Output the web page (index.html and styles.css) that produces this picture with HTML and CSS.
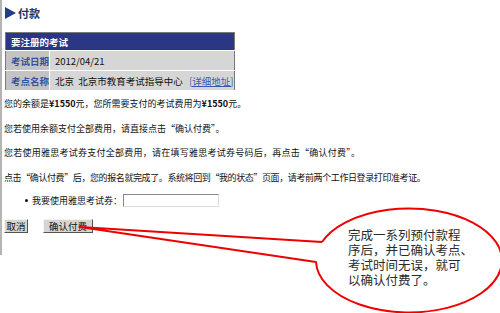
FILE: index.html
```html
<!DOCTYPE html>
<html lang="zh-CN">
<head>
<meta charset="utf-8">
<title>付款</title>
<link rel="stylesheet" href="styles.css">
</head>
<body>
<div class="page">
  <div class="title">
    <span class="tri"></span><span class="title-text">付款</span>
  </div>
  <table class="exam">
    <tr><th colspan="2" class="head">要注册的考试</th></tr>
    <tr><td class="label">考试日期</td><td class="value">2012/04/21</td></tr>
    <tr><td class="label">考点名称</td><td class="value">北京&nbsp;&nbsp;北京市教育考试指导中心&nbsp;&nbsp;&nbsp;<a class="link">[详细地址]</a></td></tr>
  </table>
  <p class="line first">您的余额是<b>¥1550</b>元，您所需要支付的考试费用为<b>¥1550</b>元。</p>
  <p class="line">您若使用余额支付全部费用，请直接点击“确认付费”。</p>
  <p class="line wide3">您若使用雅思考试券支付全部费用，请在填写雅思考试券号码后，再点击“确认付费”。</p>
  <p class="line tight4">点击“确认付费”后，您的报名就完成了。系统将回到“我的状态”页面，请考前两个工作日登录打印准考证。</p>
  <ul class="opts">
    <li><span>我要使用雅思考试券：</span><input class="voucher" type="text"></li>
  </ul>
  <div class="buttons">
    <button class="btn">取消</button>
    <button class="btn wide">确认付费</button>
  </div>
</div>
<svg class="callout" width="500" height="313" viewBox="0 0 500 313">
  <path d="M 322 242 L 80 227 L 316 262 A 93 52 0 1 0 322 242" fill="none" stroke="#ee0000" stroke-width="2" stroke-linejoin="round"/>
</svg>
<div class="callout-text">
  <div class="cl">完成一系列预付款程</div>
  <div class="cl">序后，并已确认考点、</div>
  <div class="cl">考试时间无误，就可</div>
  <div class="cl">以确认付费了。</div>
</div>
</body>
</html>
```

FILE: styles.css
```css
html, body {
  margin: 0;
  padding: 0;
  background: #fff;
}
body {
  font-family: "Noto Sans CJK SC", "Liberation Sans", sans-serif;
  font-size: 9px;
  color: #111;
  position: relative;
  width: 500px;
  height: 313px;
  overflow: hidden;
}
.page {
  border-left: 2px solid #b4b4b4;
  height: 255px;
  padding-left: 2px;
  box-sizing: border-box;
  padding-top: 6px;
}
.title {
  display: flex;
  align-items: center;
  height: 14px;
  padding-left: 1px;
}
.tri {
  width: 0;
  height: 0;
  border-top: 6px solid transparent;
  border-bottom: 6px solid transparent;
  border-left: 11px solid #233c8c;
  margin-right: 2px;
}
.title-text {
  font-weight: bold;
  font-size: 11px;
  color: #23305e;
}
.exam {
  margin: 12px 0 0 1px;
  border-collapse: collapse;
  border: 1px solid #7a7a7a;
  width: 229px;
  font-size: 9.5px;
}
.exam td, .exam th {
  padding: 0 0 0 5px;
  text-align: left;
  white-space: nowrap;
}
.head {
  background: #2b3785;
  color: #fff;
  font-weight: bold;
  height: 17px;
  border-bottom: 1px solid #fff;
}
.label {
  background: #c3c3c3;
  color: #3452a2;
  font-weight: bold;
  width: 42px;
  height: 19px;
  border-bottom: 1px solid #fff;
  border-right: 1px solid #fff;
}
.value {
  background: #d6d6d6;
  color: #111;
  height: 19px;
  border-bottom: 1px solid #fff;
}
.link {
  color: #3a56b0;
  text-decoration: underline;
}
.line {
  margin: 0;
  height: 24.5px;
  line-height: 24.5px;
  white-space: nowrap;
}
.line.first {
  margin-top: 1px;
}
.line.wide3 {
  letter-spacing: 0.25px;
}
.line.tight4 {
  letter-spacing: -0.4px;
}
.opts {
  margin: 0;
  padding: 0 0 0 21px;
  list-style: none;
}
.opts li {
  height: 20px;
  display: flex;
  align-items: center;
}
.opts li::before {
  content: "";
  width: 3px;
  height: 3px;
  background: #111;
  border-radius: 50%;
  margin-right: 4px;
}
.voucher {
  width: 96px;
  height: 13px;
  box-sizing: border-box;
  border: 1px solid #888;
  border-right-color: #ddd;
  border-bottom-color: #ddd;
  margin: 0 0 0 1px;
  padding: 0;
}
.buttons {
  display: flex;
  gap: 15px;
  margin-top: 9px;
}
.btn {
  font-family: inherit;
  font-size: 9.5px;
  height: 14px;
  width: 24px;
  padding: 0;
  background: #d8d5ce;
  border: 1px solid;
  border-color: #f4f4f4 #555 #555 #f4f4f4;
  line-height: 12px;
  color: #111;
}
.btn.wide {
  width: 50px;
}
.callout {
  position: absolute;
  left: 0;
  top: 0;
  pointer-events: none;
}
.callout-text {
  position: absolute;
  left: 348px;
  top: 227px;
  font-size: 12.5px;
  color: #2a2a2a;
  white-space: nowrap;
}
.cl {
  height: 15px;
  line-height: 15px;
}
```
